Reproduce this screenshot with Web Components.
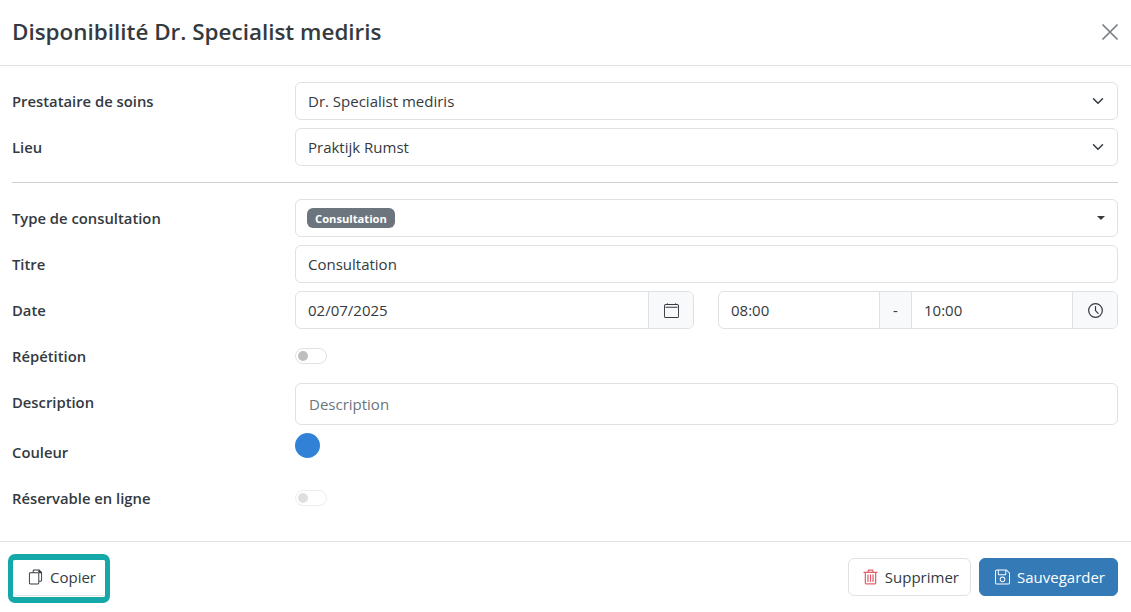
<!DOCTYPE html>
<html lang="fr">
<head>
<meta charset="utf-8">
<title>Disponibilité</title>
<style>
  html, body { margin: 0; height: 100%; background: #fff; }
  body { font-family: "Open Sans", "Noto Sans", sans-serif; font-size: 15px; color: #343a40; overflow: hidden; }
</style>
</head>
<body>

<avail-modal heading="Disponibilité Dr. Specialist mediris">
  <form-row label="Prestataire de soins"><select-box value="Dr. Specialist mediris"></select-box></form-row>
  <form-row label="Lieu"><select-box value="Praktijk Rumst"></select-box></form-row>
  <hr-line></hr-line>
  <form-row label="Type de consultation"><tag-select value="Consultation"></tag-select></form-row>
  <form-row label="Titre"><text-box value="Consultation"></text-box></form-row>
  <form-row label="Date"><date-time date="02/07/2025" from="08:00" to="10:00"></date-time></form-row>
  <form-row label="Répétition"><toggle-switch></toggle-switch></form-row>
  <form-row label="Description" tall><text-box placeholder="Description" tall></text-box></form-row>
  <form-row label="Couleur" short><color-dot></color-dot></form-row>
  <form-row label="Réservable en ligne"><toggle-switch disabled></toggle-switch></form-row>

  <action-button slot="left" kind="light" icon="copy" marked>Copier</action-button>
  <action-button slot="right" kind="light" icon="trash">Supprimer</action-button>
  <action-button slot="right" kind="primary" icon="save">Sauvegarder</action-button>
</avail-modal>

<script>
const ICONS = {
  calendar: '<path d="M3.5 0a.5.5 0 0 1 .5.5V1h8V.5a.5.5 0 0 1 1 0V1h1a2 2 0 0 1 2 2v11a2 2 0 0 1-2 2H2a2 2 0 0 1-2-2V3a2 2 0 0 1 2-2h1V.5a.5.5 0 0 1 .5-.5zM2 2a1 1 0 0 0-1 1v11a1 1 0 0 0 1 1h12a1 1 0 0 0 1-1V3a1 1 0 0 0-1-1H2zm-.5 2h13v1h-13z"/>',
  clock: '<g fill="none" stroke="currentColor" stroke-width="1.300" stroke-linecap="round" stroke-linejoin="round"><circle cx="8" cy="8" r="7.300"/><path d="M8 3.800v4.400l2.800 2.800"/></g>',
  copy: '<path fill-rule="evenodd" d="M6.5 0H12l3 3v8.5a1.5 1.5 0 0 1-1.5 1.5H12v1.5a1.5 1.5 0 0 1-1.5 1.5h-8A1.500 1.500 0 0 1 1 14.500v-10A1.500 1.500 0 0 1 2.500 3H5V1.500A1.500 1.500 0 0 1 6.500 0zM6 3h4.500A1.500 1.500 0 0 1 12 4.500V12h1.500a.5.5 0 0 0 .5-.5V4h-2.500a.5.5 0 0 1-.5-.5V1H6.500a.5.5 0 0 0-.5.5V3zM2.500 4a.5.5 0 0 0-.5.5v10a.5.5 0 0 0 .5.5h8a.5.5 0 0 0 .5-.5v-10a.5.5 0 0 0-.5-.5h-8z"/>',
  trash: '<g fill="none" stroke="currentColor" stroke-width="1.300" stroke-linecap="round" stroke-linejoin="round"><path d="M1 3h14M5.500 3V1.200a.6.6 0 0 1 .6-.6h3.800a.6.6 0 0 1 .6.6V3"/><path d="M2.500 3v11.300c0 .6.500 1.100 1.100 1.100h8.800c.6 0 1.100-.5 1.100-1.100V3"/><path d="M5.300 5.800v7M8 5.800v7M10.700 5.800v7"/></g>',
  save: '<path fill-rule="evenodd" d="M2 0h10.300L16 3.700V14a2 2 0 0 1-2 2H2a2 2 0 0 1-2-2V2a2 2 0 0 1 2-2zm2 1v4h7V1H4zM3 1H2a1 1 0 0 0-1 1v12a1 1 0 0 0 1 1h12a1 1 0 0 0 1-1V4.100L12 1v4a1 1 0 0 1-1 1H4a1 1 0 0 1-1-1V1zm5 6.500a3 3 0 1 1 0 6 3 3 0 0 1 0-6zm0 1a2 2 0 1 0 0 4 2 2 0 0 0 0-4z"/>'
};

class AvailModal extends HTMLElement {
  constructor() {
    super();
    this.attachShadow({ mode: "open" }).innerHTML = `
      <style>
        :host { display: flex; flex-direction: column; height: 612px; box-sizing: border-box; }
        header { height: 66px; box-sizing: border-box; border-bottom: 1px solid #dee2e6; display: flex; align-items: center; justify-content: space-between; padding: 0 12px 2px 12px; }
        h1 { margin: 0; font-size: 22.450px; font-weight: 600; color: #343a40; }
        svg { display: block; }
        main { flex: 1; padding: 16px 13px 0 12px; display: flex; flex-direction: column; gap: 8px; }
        footer { height: 71px; box-sizing: border-box; border-top: 1px solid #dee2e6; display: flex; align-items: flex-start; justify-content: space-between; padding: 16px 13px 0 12px; }
        .group { display: flex; gap: 8px; }
      </style>
      <header>
        <h1></h1>
        <svg width="18" height="18" viewBox="0 0 18 18" fill="none" stroke="#7b7f83" stroke-width="1.700"><path d="M1.500 1.500l15 15M16.500 1.500l-15 15"/></svg>
      </header>
      <main><slot></slot></main>
      <footer>
        <div class="group"><slot name="left"></slot></div>
        <div class="group"><slot name="right"></slot></div>
      </footer>`;
    this.shadowRoot.querySelector("h1").textContent = this.getAttribute("heading");
  }
}

class FormRow extends HTMLElement {
  constructor() {
    super();
    this.attachShadow({ mode: "open" }).innerHTML = `
      <style>
        :host { display: grid; grid-template-columns: 283px 1fr; min-height: 38px; align-items: center; }
        :host([tall]) { min-height: 42px; align-items: start; }
        label { font-weight: 600; font-size: 14.800px; color: #343a40; line-height: 39px; height: 38px; }
        :host([short]) label { line-height: 38px; }
      </style>
      <label></label>
      <div><slot></slot></div>`;
    this.shadowRoot.querySelector("label").textContent = this.getAttribute("label");
  }
}

class HrLine extends HTMLElement {
  constructor() {
    super();
    this.attachShadow({ mode: "open" }).innerHTML = `
      <style>:host { display: block; height: 1px; background: #cfd2d5; margin: 8px 0; }</style>`;
  }
}

class SelectBox extends HTMLElement {
  constructor() {
    super();
    this.attachShadow({ mode: "open" }).innerHTML = `
      <style>
        :host { display: flex; align-items: center; justify-content: space-between; height: 38px; box-sizing: border-box; border: 1px solid #dee2e6; border-radius: 6px; padding: 0 12px; background: #fff; }
        svg { display: block; margin-right: 1px; }
      </style>
      <span></span>
      <svg width="12" height="12" viewBox="0 0 16 16" fill="none" stroke="#343a40" stroke-width="2" stroke-linecap="round" stroke-linejoin="round"><path d="M2 5l6 6 6-6"/></svg>`;
    this.shadowRoot.querySelector("span").textContent = this.getAttribute("value");
  }
}

class TagSelect extends HTMLElement {
  constructor() {
    super();
    this.attachShadow({ mode: "open" }).innerHTML = `
      <style>
        :host { display: flex; align-items: center; justify-content: space-between; height: 38px; box-sizing: border-box; border: 1px solid #dee2e6; border-radius: 6px; padding: 0 12px; background: #fff; }
        span { background: #6c757d; color: #fff; font-size: 11.200px; font-weight: 700; line-height: 21px; height: 20px; padding: 0 8px; border-radius: 6px; margin-left: -1px; }
        i { width: 0; height: 0; border: 4px solid transparent; border-top-color: #343a40; border-bottom: 0; }
      </style>
      <span></span><i></i>`;
    this.shadowRoot.querySelector("span").textContent = this.getAttribute("value");
  }
}

class TextBox extends HTMLElement {
  constructor() {
    super();
    this.attachShadow({ mode: "open" }).innerHTML = `
      <style>
        :host { display: flex; align-items: center; height: 38px; box-sizing: border-box; border: 1px solid #dee2e6; border-radius: 6px; padding: 0 12px; background: #fff; }
        :host([tall]) { height: 42px; padding-left: 13px; }
        .ph { color: #6c757d; }
      </style>
      <span></span>`;
    const span = this.shadowRoot.querySelector("span");
    span.textContent = this.getAttribute("value") || this.getAttribute("placeholder");
    if (!this.hasAttribute("value")) span.className = "ph";
  }
}

class DateTime extends HTMLElement {
  constructor() {
    super();
    this.attachShadow({ mode: "open" }).innerHTML = `
      <style>
        :host { display: grid; grid-template-columns: 399px 400px; gap: 24px; }
        .group { display: flex; height: 38px; box-sizing: border-box; border: 1px solid #dee2e6; border-radius: 6px; overflow: hidden; }
        .cell { flex: 1 1 0; min-width: 0; display: flex; align-items: center; padding: 0 12px; }
        .add { flex: none; display: flex; align-items: center; justify-content: center; background: #f8f9fa; border-left: 1px solid #dee2e6; width: 45px; box-sizing: border-box; }
        .dash { width: 33px; border-right: 1px solid #dee2e6; }
        svg { display: block; fill: #343a40; color: #343a40; }
      </style>
      <div class="group">
        <div class="cell" id="d"></div>
        <div class="add"><svg width="15" height="15" viewBox="0 0 16 16">${ICONS.calendar}</svg></div>
      </div>
      <div class="group">
        <div class="cell" id="a"></div>
        <div class="add dash">-</div>
        <div class="cell" id="b"></div>
        <div class="add"><svg width="15" height="15" viewBox="0 0 16 16">${ICONS.clock}</svg></div>
      </div>`;
    this.shadowRoot.getElementById("d").textContent = this.getAttribute("date");
    this.shadowRoot.getElementById("a").textContent = this.getAttribute("from");
    this.shadowRoot.getElementById("b").textContent = this.getAttribute("to");
  }
}

class ToggleSwitch extends HTMLElement {
  constructor() {
    super();
    this.attachShadow({ mode: "open" }).innerHTML = `
      <style>
        :host { display: flex; align-items: center; width: 32px; height: 16px; box-sizing: border-box; border: 1px solid #dee2e6; border-radius: 8px; padding-left: 2px; background: #fff; }
        :host([disabled]) { border-color: #ebedef; }
        i { width: 10px; height: 10px; border-radius: 50%; background: #bfbfbf; }
        :host([disabled]) i { background: #dfdfdf; }
      </style>
      <i></i>`;
  }
}

class ColorDot extends HTMLElement {
  constructor() {
    super();
    this.attachShadow({ mode: "open" }).innerHTML = `
      <style>:host { display: block; width: 25px; height: 25px; border-radius: 50%; background: #3182d6; margin-bottom: 13px; }</style>`;
  }
}

class ActionButton extends HTMLElement {
  constructor() {
    super();
    const icon = this.getAttribute("icon");
    this.attachShadow({ mode: "open" }).innerHTML = `
      <style>
        :host { display: inline-flex; position: relative; align-items: center; gap: 7px; height: 38px; box-sizing: border-box; padding: 0 12px 0 15px; border: 1px solid #dee2e6; border-radius: 6px; background: #fff; color: #343a40; }
        :host([kind="primary"]) { background: #337ab7; border-color: #337ab7; color: #fff; }
        :host([icon="trash"]) { padding: 0 11px 0 14px; }
        svg { display: block; fill: currentColor; }
        :host([icon="trash"]) svg { color: #e4606d; }
        .mark { display: none; }
        :host([marked]) .mark { display: block; position: absolute; left: -5px; top: -5px; right: -2px; bottom: -8px; border: solid #14a8a8; border-width: 6px 5px; border-radius: 7px; }
      </style>
      <svg width="15" height="16" viewBox="0 0 16 16">${ICONS[icon]}</svg>
      <slot></slot>
      <span class="mark"></span>`;
  }
}

customElements.define("avail-modal", AvailModal);
customElements.define("form-row", FormRow);
customElements.define("hr-line", HrLine);
customElements.define("select-box", SelectBox);
customElements.define("tag-select", TagSelect);
customElements.define("text-box", TextBox);
customElements.define("date-time", DateTime);
customElements.define("toggle-switch", ToggleSwitch);
customElements.define("color-dot", ColorDot);
customElements.define("action-button", ActionButton);
</script>
</body>
</html>
